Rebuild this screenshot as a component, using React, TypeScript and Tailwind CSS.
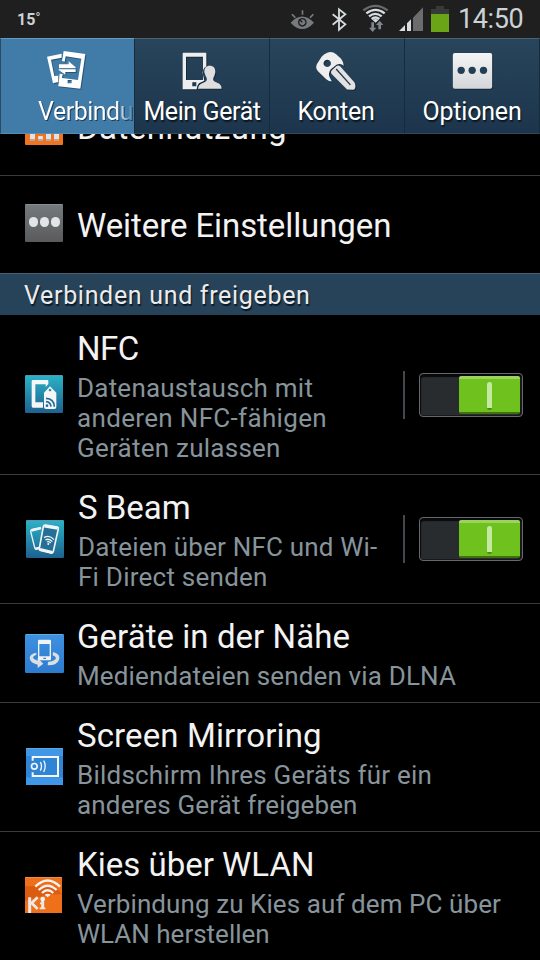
import type { ReactNode } from "react";
import clsx from "clsx";

type Tab = { label: string; icon: ReactNode; active?: boolean; labelClass?: string };
type Setting = {
  title: string;
  titleClass?: string;
  lines: { text: string; className: string }[];
  icon: ReactNode;
  height: string;
  on?: boolean;
};

function ConnectionsIcon() {
  return (
    <svg viewBox="135 150 126 123" className="mr-[3px] h-[41px] w-[42px] drop-shadow-[1px_1px_0_#285474]">
      <path fill="#fff" fillRule="evenodd" d="M141 170l44-9v12l-32 6 10 49 12-1v19l-16 4z" />
      <path fill="#fff" fillRule="evenodd" d="M191 153l65 9-15 104-66-7 4-38 9 2-2 11 48 6 10-64-47-7-3 16-8-2zM203 240v10h12v-10z" />
      <path fill="#fff" d="M177 193h29v-9l21 18v3h-50zM227 210v6h-31v8l-20-14v-2h51z" />
    </svg>
  );
}

function DeviceIcon() {
  return (
    <svg viewBox="545 150 126 123" className="h-[41px] w-[42px] drop-shadow-[1px_1px_0_#142a3b]">
      <path fill="#eee" fillRule="evenodd" d="M552 158h67q2 0 2 3v38q-11 6-11 21l5 22-16 8q-6 6-7 18h-42V161q0-3 2-3zM560 170v70h51V170zM579 247v12h12v-12z" />
      <path fill="#dedede" d="M631 197c12 0 18 8 17 20l-3 11c-5 8-5 14 2 17l13 6q7 5 7 15h-71q1-10 8-14l14-7c6-3 6-9 1-17l-4-11c-1-12 5-20 16-20z" />
    </svg>
  );
}

function KeyIcon() {
  return (
    <svg viewBox="130 150 130 123" className="mr-[4px] h-[41px] w-[43px] drop-shadow-[1px_1px_0_#142a3b]">
      <path fill="#eee" fillRule="evenodd" d="M170 158q14-6 27 4l15 14q8 10 8 21-10-9-22-3l-17 14q-9 10-4 23l7 14q-9 0-17-7l-25-24q-9-9-3-22l14-22q6-8 17-12zM170 179a11 11 0 1 0 .1 0z" />
      <path fill="#e2e2e2" d="M184 211l14-13q6-4 11 1l43 48q5 8 2 18-1 5-7 5l-17-1-46-46q-5-6 0-12z" />
      <path stroke="#20384b" strokeWidth="4" fill="none" d="M197 207l43 48" />
    </svg>
  );
}

function OptionsIcon() {
  return (
    <svg viewBox="542 150 128 123" className="h-[41px] w-[43px] drop-shadow-[1px_1px_0_#142a3b]">
      <defs>
        <linearGradient id="opt" x2="0" y2="1">
          <stop stopColor="#f4f4f4" />
          <stop offset="1" stopColor="#d4d7da" />
        </linearGradient>
      </defs>
      <rect x="547" y="159" width="118" height="107" rx="6" fill="url(#opt)" />
      <g fill="#223f55">
        <circle cx="572" cy="211" r="11" />
        <circle cx="605" cy="211" r="11" />
        <circle cx="639" cy="211" r="11" />
      </g>
    </svg>
  );
}

function DataUsageIcon() {
  return (
    <svg viewBox="0 0 38 38" className="mb-[2px] size-[38px]">
      <rect width="38" height="38" rx="1" fill="#ee7421" />
      <g fill="#dfe3e6">
        <rect x="5" y="22" width="5" height="11" />
        <rect x="13" y="29" width="5" height="4" rx="1" />
        <rect x="21" y="20" width="5" height="13" />
        <rect x="29" y="25" width="5" height="8" />
      </g>
      <path fill="#b9a79b" d="M5 32h5v2H5zM13 32h5v2h-5zM21 32h5v2h-5zM29 32h5v2h-5z" />
    </svg>
  );
}

function MoreIcon() {
  return (
    <div className="mb-[3px] flex size-[38px] justify-center gap-[2px] rounded-[1px] border-t border-[#899093] bg-linear-to-b from-[#747a7d] to-[#5a5a5b] pt-[12px]">
      <i className="h-[10px] w-[9px] rounded-full bg-[#e2e5e7]" />
      <i className="h-[10px] w-[9px] rounded-full bg-[#e2e5e7]" />
      <i className="h-[10px] w-[9px] rounded-full bg-[#e2e5e7]" />
    </div>
  );
}

function TealTile() {
  return (
    <>
      <defs>
        <linearGradient id="teal" x2="0" y2="1">
          <stop stopColor="#2bb3c7" />
          <stop offset="1" stopColor="#1d628f" />
        </linearGradient>
      </defs>
      <rect width="114" height="114" rx="4" fill="url(#teal)" />
      <path d="M3 1.500h108" stroke="#5b93b4" strokeWidth="3" />
    </>
  );
}

function NfcIcon() {
  return (
    <svg viewBox="0 0 114 114" className="mb-px size-[38px]">
      <TealTile />
      <path fill="#f4f6f7" fillRule="evenodd" d="M24 15h43q3 0 3 3v9l-8 9v-8H31v54h23v16H24q-4 0-4-4V19q0-4 4-4z" />
      <path fill="#f4f6f7" fillRule="evenodd" d="M75 34l19 19v43q0 6-6 6H63q-6 0-6-6V53zM75 41a4 4 0 1 0 .1 0z" />
      <path stroke="#216c98" strokeWidth="5" fill="none" d="M63 70q24 1 25 25M63 80q14 1 15 15" />
      <circle cx="66" cy="92" r="4" fill="#216c98" />
    </svg>
  );
}

function BeamIcon() {
  return (
    <svg viewBox="0 0 114 114" className="ml-px size-[38px]">
      <TealTile />
      <path stroke="#f1f5f7" strokeWidth="4" fill="none" d="M45 24l-27 5q-4 1-4 5l12 49q1 5 6 4l7-2" />
      <path d="M16 31l29-7" stroke="#f1f5f7" strokeWidth="8" />
      <path d="M28 86l11-2" stroke="#f1f5f7" strokeWidth="7" />
      <path stroke="#f1f5f7" strokeWidth="5" fill="#236f96" strokeLinejoin="round" d="M58 15l36 6q4 1 3 5L82 94q-1 6-7 5l-31-8q-5-1-4-6L52 20q1-5 6-5z" />
      <path d="M55 18l40 7M42 88l37 9" stroke="#f1f5f7" strokeWidth="9" />
      <g stroke="#f1f5f7" strokeWidth="4" fill="none">
        <path d="M54 53q16-10 30 6M58 60q11-6 21 5M63 66q6-3 11 3" />
      </g>
      <circle cx="67" cy="72" r="3" fill="#f1f5f7" />
    </svg>
  );
}

function NearbyIcon() {
  return (
    <svg viewBox="0 0 117 117" className="size-[39px]">
      <defs>
        <linearGradient id="blue" x2="0" y2="1">
          <stop stopColor="#3f91e1" />
          <stop offset="1" stopColor="#2d7bce" />
        </linearGradient>
      </defs>
      <rect width="117" height="117" rx="4" fill="url(#blue)" />
      <path d="M3 1.500h111" stroke="#5aaedb" strokeWidth="3" />
      {/* orbiting arrows run behind the phone */}
      <path fill="#dcdfe2" d="M34 56q-20 4-20 16 1 15 24 20v10l17-13-17-17v8q-14-4-14-10 1-5 10-8z" />
      <path fill="#dcdfe2" d="M84 54q19 5 19 17 0 16-21 22l-14 1 1-10 14-3q10-4 10-9-1-5-10-8z" />
      <path fill="#f0f2f4" fillRule="evenodd" d="M42 17h33q3 0 3 4v54q0 4-3 4H42q-3 0-3-4V21q0-4 3-4zM43 30v37h31V30zM55 71v4h8v-4z" />
    </svg>
  );
}

function MirrorIcon() {
  return (
    <svg viewBox="0 0 111 111" className="mb-[2px] ml-px size-[37px]">
      <rect width="111" height="111" fill="#4097e8" />
      <rect y="24" width="111" height="64" fill="#2f84d6" />
      <path d="M0 1.500h111" stroke="#58a9e0" strokeWidth="3" />
      <path stroke="#f4f6f8" strokeWidth="6" fill="none" d="M20 38V27h76v57H20V73" />
      <g stroke="#f4f6f8" fill="none" strokeWidth="5">
        <circle cx="25" cy="55" r="8.500" />
        <path d="M43 42q7 12 0 26M53 38q9 16 0 34" strokeWidth="4" />
      </g>
    </svg>
  );
}

function KiesIcon() {
  return (
    <svg viewBox="0 0 111 108" className="mb-[2px] h-[36px] w-[37px]">
      <rect width="111" height="108" fill="#ee701b" />
      <path d="M0 28h90l21 24H70L0 72z" fill="#db5b10" />
      <path d="M0 1.500h111" stroke="#f28a49" strokeWidth="3" />
      <g stroke="#f3f1ef" fill="none" strokeWidth="7">
        <path d="M31 29q37-37 74 0M41 39q27-26 54 0M51 48q17-16 34 0" />
      </g>
      <path fill="#f3f1ef" d="M59 53q9-6 18 0l-9 8z" />
      <path stroke="#eceae8" strokeWidth="9" d="M14 61v47M53 66v28" fill="none" />
      <path stroke="#eceae8" strokeWidth="5" d="M44 94h17M45 79h8" fill="none" />
      <path stroke="#eceae8" strokeWidth="8" d="M38 61L20 78l18 18" fill="none" />
      <circle cx="53" cy="66" r="7" fill="#f3f1ef" />
    </svg>
  );
}

function StatusIcons() {
  return (
    <svg viewBox="60 0 480 114" className="h-[38px] w-[160px]">
      {/* smart stay */}
      <path fill="#777b7e" fillRule="evenodd" d="M62 68q34-37 70 0-36 38-70 0zM97 54a13 13 0 1 0 .1 0z" />
      <path fill="#777b7e" d="M97 58a9 9 0 1 0 .1 0zM64 44l4-3 10 11-4 3zM95 31h5v13h-5zM128 41l4 3-10 11-4-3z" />
      <path d="M87 58l10 9" stroke="#1f1f1f" strokeWidth="4" />
      {/* bluetooth */}
      <path stroke="#d5dadd" strokeWidth="5.500" fill="none" d="M188 43l38 30-19 16V28l19 15-38 31" />
      {/* wifi */}
      <g fill="none" strokeWidth="7">
        <path stroke="#686a6c" d="M280 31q36-27 73 0" />
        <g stroke="#d8dcdf">
          <path d="M289 40q28-21 55 0M297 49q19-15 38 0M305 57q11-9 23 0" />
        </g>
      </g>
      <path fill="#d8dcdf" d="M307 59q9-4 19 0l-9 9z" />
      <path fill="#7d878b" d="M304 67h8v16h7l-11 13-11-13h7zM325 88V75h-7l11-13 11 13h-7v13z" />
      {/* signal */}
      <path fill="#6c6c6c" d="M429 53l30-31v71h-30z" />
      <path fill="#d9dde0" d="M387 93l18-18v18zM411 70l12-12v35h-12z" />
      {/* battery */}
      <path fill="#363a3b" d="M483 27h15v-9h24v9h15v15h-54z" />
      <path fill="#69a516" d="M483 42h54v54h-54z" />
    </svg>
  );
}

const TABS: Tab[] = [
  { label: "Verbindu", icon: <ConnectionsIcon />, active: true, labelClass: "tracking-[-0.5px]" },
  { label: "Mein Gerät", icon: <DeviceIcon />, labelClass: "tracking-[-0.4px]" },
  { label: "Konten", icon: <KeyIcon />, labelClass: "pr-[2px] tracking-[-0.3px]" },
  { label: "Optionen", icon: <OptionsIcon />, labelClass: "tracking-[-0.2px]" },
];

const SETTINGS: Setting[] = [
  {
    title: "NFC",
    titleClass: "pt-px tracking-[-0.5px]",
    lines: [
      { text: "Datenaustausch mit", className: "tracking-[0.22px]" },
      { text: "anderen NFC-fähigen", className: "tracking-[0.33px]" },
      { text: "Geräten zulassen", className: "tracking-[0.25px]" },
    ],
    icon: <NfcIcon />,
    height: "h-[160px]",
    on: true,
  },
  {
    title: "S Beam",
    titleClass: "pl-px",
    lines: [
      { text: "Dateien über NFC und Wi-", className: "pl-px tracking-[0.18px]" },
      { text: "Fi Direct senden", className: "pl-px tracking-[0.24px]" },
    ],
    icon: <BeamIcon />,
    height: "h-[129px]",
    on: true,
  },
  {
    title: "Geräte in der Nähe",
    titleClass: "tracking-[0.05px]",
    lines: [{ text: "Mediendateien senden via DLNA", className: "tracking-[0.15px]" }],
    icon: <NearbyIcon />,
    height: "h-[99px]",
  },
  {
    title: "Screen Mirroring",
    titleClass: "tracking-[0.12px]",
    lines: [
      { text: "Bildschirm Ihres Geräts für ein", className: "tracking-[0.22px]" },
      { text: "anderes Gerät freigeben", className: "tracking-[0.16px]" },
    ],
    icon: <MirrorIcon />,
    height: "h-[129px]",
  },
  {
    title: "Kies über WLAN",
    lines: [
      { text: "Verbindung zu Kies auf dem PC über", className: "tracking-[0.08px]" },
      { text: "WLAN herstellen", className: "" },
    ],
    icon: <KiesIcon />,
    height: "h-[129px]",
  },
];

function Switch() {
  return (
    <div className="flex items-center">
      <div className="h-12 w-[2px] bg-[#41474a]" />
      <div className="ml-[14px] flex h-[44px] w-[104px] justify-end rounded-[4px] border border-[#65696b] bg-[#282c2f] pt-[2px] pr-[2px] shadow-[inset_1px_3px_1px_#08090a,inset_-2px_-1px_0_#17191b]">
        <div className="flex h-[38px] w-[61px] justify-center rounded-[2px] border-t-[3px] border-b-2 border-t-[#9bd35c] border-b-[#41710f] bg-[#6fc11d] pt-[3px]">
          <div className="h-[28px] w-[5px] rounded-full border-b-2 border-[#4b8a12] bg-[#c5e9a0]" />
        </div>
      </div>
    </div>
  );
}

function SettingRow({ item }: { item: Setting }) {
  return (
    <li className={clsx("flex shrink-0 items-center border-b border-[#3b3b3b] pr-[17px] pl-[25px]", item.height)}>
      <div className="flex w-[52px] shrink-0">{item.icon}</div>
      <div className="flex-1 self-start pt-[13px] whitespace-nowrap">
        <div className={clsx("text-[33px] leading-[40px] text-[#f3f3f3]", item.titleClass)}>{item.title}</div>
        <div className="mt-1 text-[26px] leading-[30px] text-[#87949b]">
          {item.lines.map((l) => (
            <div key={l.text} className={l.className}>{l.text}</div>
          ))}
        </div>
      </div>
      {item.on && <Switch />}
    </li>
  );
}

export default function App() {
  return (
    <div className="flex h-[960px] w-[540px] flex-col overflow-hidden bg-black font-['Roboto','Liberation_Sans',sans-serif]">
      <header className="flex h-[38px] shrink-0 items-center bg-[#1f1f1f] pl-[17px] text-[#cdd2d5]">
        <span className="w-[273px] pt-px text-[16px] leading-none font-bold">
          15˚
        </span>
        <StatusIcons />
        <span className="ml-[8px] text-[27px] leading-[38px] tracking-[-0.4px]">14:50</span>
      </header>

      <nav className="flex h-[96px] shrink-0 bg-[#142c40]">
        {TABS.map((t) => (
          <div
            key={t.label}
            className={clsx(
              "flex h-[96px] w-[135px] shrink-0 flex-col items-center border-t border-r border-b border-r-[#152c3d] pt-[11px] whitespace-nowrap text-white",
              t.active
                ? "border-l border-t-[#659bc0] border-b-[#568db3] border-l-[#2a4a63] bg-[#417ba8]"
                : "border-t-[#496376] border-b-[#304a5e] bg-linear-to-b from-[#28455b] to-[#1c354c]",
            )}
          >
            {t.icon}
            <div
              className={clsx(
                "mt-[6px] text-[25px] leading-[30px]",
                t.active
                  ? "mr-px self-end bg-linear-to-r from-white from-82% to-[#5c8db2] to-98% bg-clip-text text-transparent drop-shadow-[1px_1px_0_#1d3f5a]"
                  : "[text-shadow:1px_2px_1px_#0b1824]",
                t.labelClass,
              )}
            >
              {t.label}
            </div>
          </div>
        ))}
      </nav>

      <main className="flex min-h-0 flex-1 flex-col overflow-hidden">
        <ul className="flex shrink-0 flex-col">
          <li className="-mt-[56px] flex h-[98px] items-center border-b border-[#3b3b3b] pl-[25px]">
            <div className="flex w-[52px]"><DataUsageIcon /></div>
            <span className="pt-[3px] text-[33px] leading-[40px] tracking-[0.45px] text-[#f3f3f3]">Datennutzung</span>
          </li>
          <li className="flex h-[97px] items-center pl-[25px]">
            <div className="flex w-[52px]"><MoreIcon /></div>
            <span className="pt-[2px] text-[33px] leading-[40px] tracking-[-0.09px] text-[#f3f3f3]">Weitere Einstellungen</span>
          </li>
        </ul>
        <h2 className="h-[42px] shrink-0 border-t border-[#48606f] bg-[#27435a] pl-[24px] text-[25px] leading-[43px] tracking-[0.68px] text-[#ececec] [text-shadow:1px_2px_1px_#0b1824]">
          Verbinden und freigeben
        </h2>
        <ul className="flex shrink-0 flex-col">
          {SETTINGS.map((s) => (
            <SettingRow key={s.title} item={s} />
          ))}
        </ul>
      </main>
    </div>
  );
}
